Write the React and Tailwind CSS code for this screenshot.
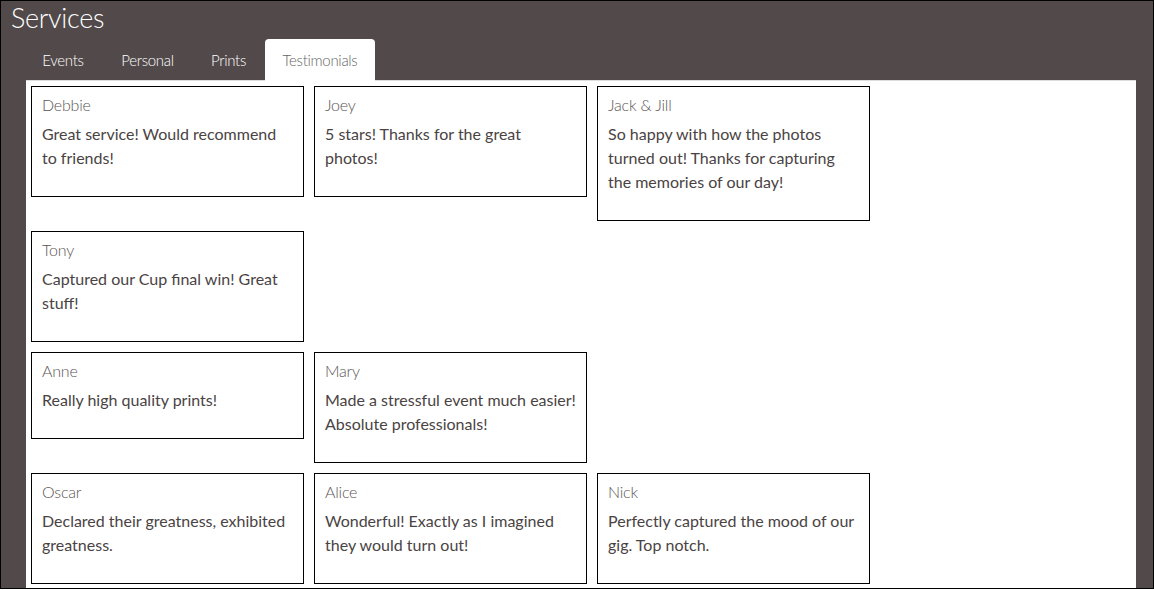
const TABS = [
  { label: 'Events', w: 'w-[74px]' },
  { label: 'Personal', w: 'w-[89px]' },
  { label: 'Prints', w: 'w-[67px]' },
  { label: 'Testimonials', w: 'w-[110px]' },
];

const ROWS = [
  [
    { name: 'Debbie', text: 'Great service! Would recommend to friends!' },
    { name: 'Joey', text: '5 stars! Thanks for the great photos!' },
    { name: 'Jack & Jill', text: 'So happy with how the photos turned out! Thanks for capturing the memories of our day!' },
  ],
  [{ name: 'Tony', text: 'Captured our Cup final win! Great stuff!' }],
  [
    { name: 'Anne', text: 'Really high quality prints!' },
    { name: 'Mary', text: 'Made a stressful event much easier! Absolute professionals!' },
  ],
  [
    { name: 'Oscar', text: 'Declared their greatness, exhibited greatness.' },
    { name: 'Alice', text: 'Wonderful! Exactly as I imagined they would turn out!' },
    { name: 'Nick', text: 'Perfectly captured the mood of our gig. Top notch.' },
  ],
];

// Thin display face stands in for the original geometric script.
const thin = "font-['Lato','Open_Sans',sans-serif] font-light";

function Card({ name, text }) {
  return (
    <div className="w-[273px] border border-black bg-white px-[10px] pt-[6px] pb-[26px]">
      <h3 className={`${thin} text-[16px] leading-[24px] tracking-[-0.2px] text-[#5c5555]`}>{name}</h3>
      <p className="mt-[5px] font-['Lato',sans-serif] text-[16px] leading-[24px] text-[#4a4343]">{text}</p>
    </div>
  );
}

export default function App() {
  return (
    <div className="border border-black bg-[#524a4a] pl-[25px] pr-[17px] font-['Lato',sans-serif]">
      <h1 className={`${thin} -ml-[15px] mb-[4px] text-[27px] leading-[34px] tracking-[-0.3px] text-white`}>Services</h1>

      {/* Tab strip */}
      <ul className="relative z-10 -mb-px flex gap-[3px]">
        {TABS.map(({ label, w }) => {
          const active = label === 'Testimonials';
          return (
            <li
              key={label}
              className={
                active
                  ? `${thin} ${w} rounded-t-[4px] bg-white text-center text-[15px] leading-[42px] tracking-[-0.3px] text-[#666]`
                  : `${thin} ${w} text-center text-[15px] leading-[42px] tracking-[-0.3px] text-white`
              }
            >
              {label}
            </li>
          );
        })}
      </ul>

      {/* Tab panel */}
      <div className="flex flex-col gap-[10px] border-t border-[#ddd] bg-white pt-[5px] pb-[4px] pl-[5px]">
        {ROWS.map((row, i) => (
          <div key={i} className="flex items-start gap-[10px]">
            {row.map((t) => (
              <Card key={t.name} {...t} />
            ))}
          </div>
        ))}
      </div>
    </div>
  );
}
